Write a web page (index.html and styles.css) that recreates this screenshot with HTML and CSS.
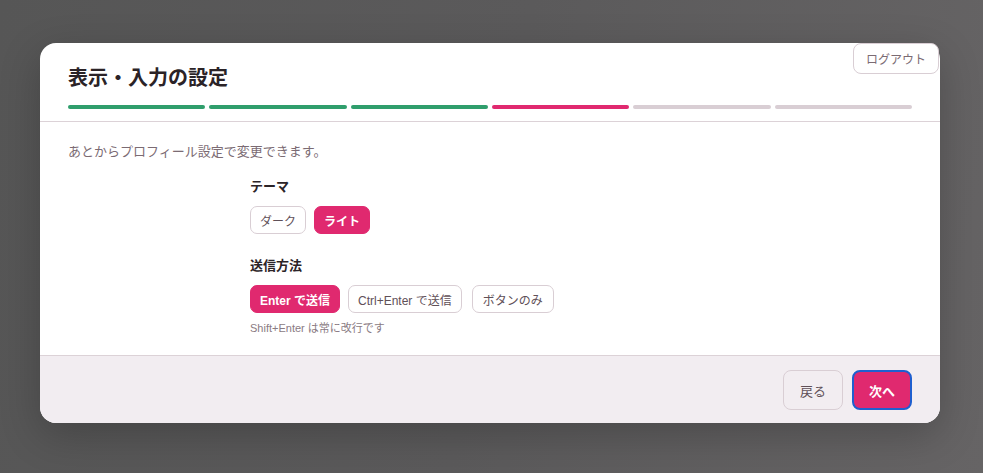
FILE: index.html
```html
<!DOCTYPE html>
<html lang="ja">
<head>
    <meta charset="utf-8">
    <meta name="viewport" content="width=device-width, initial-scale=1.0">
    <title>表示・入力の設定</title>
    <link rel="stylesheet" href="styles.css">
</head>
<body>
    <button class="logout-button">ログアウト</button>

    <div class="overlay">
        <div class="modal">
            <div class="modal-header">
                <h2 class="modal-title">表示・入力の設定</h2>
                <div class="steps">
                    <span class="step done"></span>
                    <span class="step done"></span>
                    <span class="step done"></span>
                    <span class="step current"></span>
                    <span class="step"></span>
                    <span class="step"></span>
                </div>
            </div>

            <div class="modal-body">
                <p class="intro">あとからプロフィール設定で変更できます。</p>

                <div class="settings">
                    <div class="setting-group">
                        <h3 class="setting-label">テーマ</h3>
                        <div class="choices">
                            <button class="choice">ダーク</button>
                            <button class="choice selected">ライト</button>
                        </div>
                    </div>

                    <div class="setting-group">
                        <h3 class="setting-label">送信方法</h3>
                        <div class="choices">
                            <button class="choice selected">Enter で送信</button>
                            <button class="choice">Ctrl+Enter で送信</button>
                            <button class="choice">ボタンのみ</button>
                        </div>
                        <p class="hint">Shift+Enter は常に改行です</p>
                    </div>
                </div>
            </div>

            <div class="modal-footer">
                <button class="back-button">戻る</button>
                <button class="next-button focused">次へ</button>
            </div>
        </div>
    </div>
</body>
</html>
```

FILE: styles.css
```css
body {
    font-family: "Liberation Sans", "Noto Sans CJK JP", sans-serif;
    margin: 0;
    padding: 0;
    height: 473px;
    background: linear-gradient(100deg, #565656 0%, #5b5a5b 50%, #666465 100%);
    color: #2b2327;
}

button {
    font-family: inherit;
    cursor: pointer;
}

.overlay {
    display: flex;
    justify-content: center;
    padding: 43px 43px 0 40px;
}

.modal {
    width: 900px;
    background-color: #ffffff;
    border-radius: 16px;
    overflow: hidden;
    box-shadow: 0 12px 40px rgba(0, 0, 0, 0.22);
}

.modal-header {
    padding: 21px 28px 12px;
    border-bottom: 1px solid #dcd2d7;
}

.modal-title {
    margin: 0;
    font-size: 20px;
    line-height: 28px;
    font-weight: bold;
    color: #2b2327;
}

.steps {
    display: flex;
    gap: 4px;
    margin-top: 13px;
}

.step {
    flex: 1;
    height: 4px;
    border-radius: 2px;
    background-color: #d9ced4;
}

.step.done {
    background-color: #2f9e6c;
}

.step.current {
    background-color: #e0296f;
}

.modal-body {
    padding: 20px 28px 19px;
}

.intro {
    margin: 0;
    font-size: 13px;
    line-height: 20px;
    color: #7b6b73;
}

.settings {
    max-width: 480px;
    margin: 15px auto 0;
}

.setting-group + .setting-group {
    margin-top: 22px;
}

.setting-label {
    margin: 0 0 9px;
    font-size: 13px;
    line-height: 20px;
    font-weight: bold;
    color: #2b2327;
}

.choices {
    display: flex;
    gap: 8px;
}

.choice {
    height: 28px;
    padding: 0 9px;
    font-size: 12px;
    color: #5f5058;
    background-color: #ffffff;
    border: 1px solid #d9ced4;
    border-radius: 7px;
}

.choice.selected {
    color: #ffffff;
    font-weight: bold;
    background-color: #e0296f;
    border-color: #e0296f;
}

.choice + .choice + .choice {
    margin-left: 2px;
    padding: 0 10px;
}

.hint {
    margin: 7px 0 0;
    font-size: 11px;
    line-height: 16px;
    color: #8a7b83;
}

.modal-footer {
    display: flex;
    justify-content: flex-end;
    gap: 9px;
    padding: 14px 28px 13px;
    background-color: #f2edf1;
    border-top: 1px solid #dcd2d7;
}

.back-button,
.next-button {
    height: 40px;
    padding: 0 16px;
    font-size: 13px;
    border-radius: 8px;
}

.back-button {
    color: #5f5058;
    background-color: #f2edf1;
    border: 1px solid #d9ced4;
}

.next-button {
    color: #ffffff;
    font-weight: bold;
    background-color: #e0296f;
    border: 1px solid #e0296f;
}

.next-button.focused {
    border: 2px solid #1f5fcf;
    padding: 0 15px;
}

.logout-button {
    position: absolute;
    top: 43px;
    right: 44px;
    height: 31px;
    padding: 0 12px;
    font-size: 12px;
    color: #7b6b73;
    background-color: #ffffff;
    border: 1px solid #d9ced4;
    border-radius: 8px;
    z-index: 2;
}
```
